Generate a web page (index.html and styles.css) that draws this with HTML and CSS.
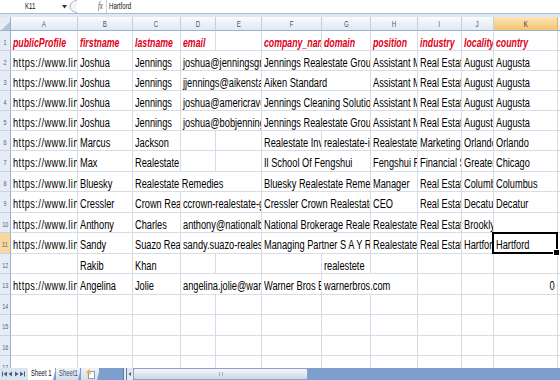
FILE: index.html
```html
<!DOCTYPE html>
<html lang="en">

<head>
    <meta charset="UTF-8">
    <meta name="viewport" content="width=device-width, initial-scale=1.0">
    <title>Book1 - Sheet 1</title>
    <link rel="stylesheet" href="styles.css">
</head>

<body>
    <div class="formula-bar">
        <div class="name-box"><span>K11</span></div>
        <div class="name-arrow">
            <svg width="6" height="4" viewBox="0 0 6 4"><polygon points="0,0 5,0 2.5,3.5" fill="#333" /></svg>
        </div>
        <div class="grip">
            <svg width="10" height="13" viewBox="0 0 10 13">
                <path d="M9 0.5 A7 6 0 0 0 9 12.5" fill="#f3f5f9" stroke="#aab6c8" />
            </svg>
        </div>
        <div class="fx"><span>fx</span></div>
        <div class="formula"><span>Hartford</span></div>
    </div>

    <div class="sheet">
        <!-- column headers -->
        <div class="corner"></div>
        <div class="ch"><span>A</span></div>
        <div class="ch"><span>B</span></div>
        <div class="ch"><span>C</span></div>
        <div class="ch"><span>D</span></div>
        <div class="ch"><span>E</span></div>
        <div class="ch"><span>F</span></div>
        <div class="ch"><span>G</span></div>
        <div class="ch"><span>H</span></div>
        <div class="ch"><span>I</span></div>
        <div class="ch"><span>J</span></div>
        <div class="ch on"><span>K</span></div>
        <div class="ch"><span>L</span></div>

        <!-- row 1 -->
        <div class="rh"><span>1</span></div>
        <div class="c hd"><span>publicProfile</span></div>
        <div class="c hd"><span>firstname</span></div>
        <div class="c hd"><span>lastname</span></div>
        <div class="c hd"><span>email</span></div>
        <div class="c"></div>
        <div class="c hd"><span>company_name</span></div>
        <div class="c hd"><span>domain</span></div>
        <div class="c hd"><span>position</span></div>
        <div class="c hd"><span>industry</span></div>
        <div class="c hd"><span>locality</span></div>
        <div class="c hd"><span>country</span></div>
        <div class="c"></div>

        <!-- row 2 -->
        <div class="rh"><span>2</span></div>
        <div class="c url"><span>https://www.linkedin.com/in/joshuajennings</span></div>
        <div class="c"><span>Joshua</span></div>
        <div class="c"><span>Jennings</span></div>
        <div class="c span2"><span>joshua@jenningsgroup.com</span></div>
        <div class="c span2"><span>Jennings Realestate Group</span></div>
        <div class="c"><span>Assistant Manager</span></div>
        <div class="c"><span>Real Estate</span></div>
        <div class="c"><span>Augusta</span></div>
        <div class="c"><span>Augusta</span></div>
        <div class="c"></div>

        <!-- row 3 -->
        <div class="rh"><span>3</span></div>
        <div class="c url"><span>https://www.linkedin.com/in/jjennings</span></div>
        <div class="c"><span>Joshua</span></div>
        <div class="c"><span>Jennings</span></div>
        <div class="c span2"><span>jjennings@aikenstandard.com</span></div>
        <div class="c span2"><span>Aiken Standard</span></div>
        <div class="c"><span>Assistant Manager</span></div>
        <div class="c"><span>Real Estate</span></div>
        <div class="c"><span>Augusta</span></div>
        <div class="c"><span>Augusta</span></div>
        <div class="c"></div>

        <!-- row 4 -->
        <div class="rh"><span>4</span></div>
        <div class="c url"><span>https://www.linkedin.com/in/joshua-j</span></div>
        <div class="c"><span>Joshua</span></div>
        <div class="c"><span>Jennings</span></div>
        <div class="c span2"><span>joshua@americravenue.com</span></div>
        <div class="c span2"><span>Jennings Cleaning Solutions</span></div>
        <div class="c"><span>Assistant Manager</span></div>
        <div class="c"><span>Real Estate</span></div>
        <div class="c"><span>Augusta</span></div>
        <div class="c"><span>Augusta</span></div>
        <div class="c"></div>

        <!-- row 5 -->
        <div class="rh"><span>5</span></div>
        <div class="c url"><span>https://www.linkedin.com/in/bobjennings</span></div>
        <div class="c"><span>Joshua</span></div>
        <div class="c"><span>Jennings</span></div>
        <div class="c span2"><span>joshua@bobjennings.com</span></div>
        <div class="c span2"><span>Jennings Realestate Group</span></div>
        <div class="c"><span>Assistant Manager</span></div>
        <div class="c"><span>Real Estate</span></div>
        <div class="c"><span>Augusta</span></div>
        <div class="c"><span>Augusta</span></div>
        <div class="c"></div>

        <!-- row 6 -->
        <div class="rh"><span>6</span></div>
        <div class="c url"><span>https://www.linkedin.com/in/marcusj</span></div>
        <div class="c"><span>Marcus</span></div>
        <div class="c"><span>Jackson</span></div>
        <div class="c"></div>
        <div class="c"></div>
        <div class="c"><span>Realestate Investments</span></div>
        <div class="c"><span>realestate-investments.com</span></div>
        <div class="c"><span>Realestate Agent</span></div>
        <div class="c"><span>Marketing and Advertising</span></div>
        <div class="c"><span>Orlando</span></div>
        <div class="c"><span>Orlando</span></div>
        <div class="c"></div>

        <!-- row 7 -->
        <div class="rh"><span>7</span></div>
        <div class="c url"><span>https://www.linkedin.com/in/maxrealestate</span></div>
        <div class="c"><span>Max</span></div>
        <div class="c"><span>Realestate</span></div>
        <div class="c"></div>
        <div class="c"></div>
        <div class="c span2"><span>Il School Of Fengshui</span></div>
        <div class="c"><span>Fengshui Realestate</span></div>
        <div class="c"><span>Financial Services</span></div>
        <div class="c"><span>Greater Chicago Area</span></div>
        <div class="c"><span>Chicago</span></div>
        <div class="c"></div>

        <!-- row 8 -->
        <div class="rh"><span>8</span></div>
        <div class="c url"><span>https://www.linkedin.com/in/bluesky</span></div>
        <div class="c"><span>Bluesky</span></div>
        <div class="c span3"><span>Realestate Remedies</span></div>
        <div class="c span2"><span>Bluesky Realestate Remedies</span></div>
        <div class="c"><span>Manager</span></div>
        <div class="c"><span>Real Estate</span></div>
        <div class="c"><span>Columbus</span></div>
        <div class="c"><span>Columbus</span></div>
        <div class="c"></div>

        <!-- row 9 -->
        <div class="rh"><span>9</span></div>
        <div class="c url"><span>https://www.linkedin.com/in/cressler</span></div>
        <div class="c"><span>Cressler</span></div>
        <div class="c"><span>Crown Realestate</span></div>
        <div class="c span2"><span>ccrown-realestate-group.com</span></div>
        <div class="c span2"><span>Cressler Crown Realestate</span></div>
        <div class="c"><span>CEO</span></div>
        <div class="c"><span>Real Estate</span></div>
        <div class="c"><span>Decatur</span></div>
        <div class="c"><span>Decatur</span></div>
        <div class="c"></div>

        <!-- row 10 -->
        <div class="rh"><span>10</span></div>
        <div class="c url"><span>https://www.linkedin.com/in/anthonyc</span></div>
        <div class="c"><span>Anthony</span></div>
        <div class="c"><span>Charles</span></div>
        <div class="c span2"><span>anthony@nationalbrokerage.com</span></div>
        <div class="c span2"><span>National Brokerage Realestate</span></div>
        <div class="c"><span>Realestate</span></div>
        <div class="c"><span>Real Estate</span></div>
        <div class="c"><span>Brooklyn</span></div>
        <div class="c"></div>
        <div class="c"></div>

        <!-- row 11 -->
        <div class="rh on"><span>11</span></div>
        <div class="c url"><span>https://www.linkedin.com/in/sandysuazo</span></div>
        <div class="c"><span>Sandy</span></div>
        <div class="c"><span>Suazo Realestate</span></div>
        <div class="c span2"><span>sandy.suazo-realestate@gmail.com</span></div>
        <div class="c span2"><span>Managing Partner S A Y R Realestate</span></div>
        <div class="c"><span>Realestate</span></div>
        <div class="c"><span>Real Estate</span></div>
        <div class="c"><span>Hartford</span></div>
        <div class="c sel"><span>Hartford</span></div>
        <div class="c"></div>

        <!-- row 12 -->
        <div class="rh"><span>12</span></div>
        <div class="c"></div>
        <div class="c"><span>Rakib</span></div>
        <div class="c"><span>Khan</span></div>
        <div class="c"></div>
        <div class="c"></div>
        <div class="c"></div>
        <div class="c"><span>realestete</span></div>
        <div class="c"></div>
        <div class="c"></div>
        <div class="c"></div>
        <div class="c"></div>
        <div class="c"></div>

        <!-- row 13 -->
        <div class="rh"><span>13</span></div>
        <div class="c url"><span>https://www.linkedin.com/in/angelinajolie</span></div>
        <div class="c"><span>Angelina</span></div>
        <div class="c"><span>Jolie</span></div>
        <div class="c span2"><span>angelina.jolie@warnerbros.com</span></div>
        <div class="c"><span>Warner Bros Entertainment</span></div>
        <div class="c span2"><span>warnerbros.com</span></div>
        <div class="c"></div>
        <div class="c"></div>
        <div class="c num"><span>0</span></div>
        <div class="c"></div>

        <!-- rows 14 - 17 -->
        <div class="rh"><span>14</span></div>
        <div class="c"></div><div class="c"></div><div class="c"></div><div class="c"></div>
        <div class="c"></div><div class="c"></div><div class="c"></div><div class="c"></div>
        <div class="c"></div><div class="c"></div><div class="c"></div><div class="c"></div>

        <div class="rh"><span>15</span></div>
        <div class="c"></div><div class="c"></div><div class="c"></div><div class="c"></div>
        <div class="c"></div><div class="c"></div><div class="c"></div><div class="c"></div>
        <div class="c"></div><div class="c"></div><div class="c"></div><div class="c"></div>

        <div class="rh"><span>16</span></div>
        <div class="c"></div><div class="c"></div><div class="c"></div><div class="c"></div>
        <div class="c"></div><div class="c"></div><div class="c"></div><div class="c"></div>
        <div class="c"></div><div class="c"></div><div class="c"></div><div class="c"></div>

        <div class="rh"><span>17</span></div>
        <div class="c"></div><div class="c"></div><div class="c"></div><div class="c"></div>
        <div class="c"></div><div class="c"></div><div class="c"></div><div class="c"></div>
        <div class="c"></div><div class="c"></div><div class="c"></div><div class="c"></div>
    </div>

    <div class="tab-bar">
        <div class="tab-nav">
            <svg width="28" height="12" viewBox="0 0 28 12">
                <rect x="2" y="3.5" width="1" height="5" fill="#4a5e7e" />
                <polygon points="7,3.5 7,8.5 3.5,6" fill="#4a5e7e" />
                <polygon points="12,3.5 12,8.5 8.5,6" fill="#4a5e7e" />
                <polygon points="15,3.5 15,8.5 18.5,6" fill="#4a5e7e" />
                <polygon points="20,3.5 20,8.5 23.5,6" fill="#4a5e7e" />
                <rect x="24" y="3.5" width="1" height="5" fill="#4a5e7e" />
            </svg>
        </div>
        <div class="tab active"><span>Sheet 1</span></div>
        <div class="tab"><span>Sheet1</span></div>
        <div class="tab tab-new">
            <svg width="10" height="10" viewBox="0 0 10 10">
                <rect x="2.5" y="2.5" width="6" height="7" fill="#fff" stroke="#8a9ab3" />
                <polygon points="3,0 4,2 6,2 4.5,3.3 5,5.5 3,4.2 1,5.5 1.5,3.3 0,2 2,2" fill="#f0a830" />
            </svg>
        </div>
        <div class="tab-fill"></div>
        <div class="split"></div>
        <div class="scroll">
            <div class="scroll-btn">
                <svg width="6" height="12" viewBox="0 0 6 12"><polygon points="4,4 4,8 1.5,6" fill="#4a5e7e" /></svg>
            </div>
            <div class="thumb"><i></i></div>
        </div>
    </div>
</body>

</html>
```

FILE: styles.css
```css
* {
    box-sizing: border-box;
}

html,
body {
    margin: 0;
}

body {
    font-family: "Liberation Sans", Arial, sans-serif;
    background: #dfe7f2;
    height: 380px;
    display: flex;
    flex-direction: column;
    overflow: hidden;
}

/* formula bar */

.formula-bar {
    display: flex;
    height: 14px;
    margin-bottom: 3px;
    background: #fff;
    border-bottom: 1px solid #a8bbd6;
    font-size: 8.5px;
    line-height: 13px;
    color: #111;
    white-space: nowrap;
}

.formula-bar span {
    display: inline-block;
    transform: scaleX(.72);
}

.name-box {
    width: 60px;
    text-align: center;
}

.name-arrow {
    width: 8px;
    padding: 5px 0 0 2px;
    line-height: 0;
}

.grip {
    width: 10px;
    line-height: 0;
}

.fx {
    width: 28px;
    text-align: right;
    padding-right: 2px;
    font-family: "Liberation Serif", serif;
    font-style: italic;
    font-size: 9.5px;
    color: #555;
}

.formula {
    flex: 1;
    border-left: 1px solid #c9d3e1;
    padding-left: 2px;
}

.formula span {
    transform-origin: 0 0;
}

/* sheet grid */

.sheet {
    flex: 1;
    min-height: 0;
    display: grid;
    grid-template-columns: 11px 67px 55px 48px 35px 46px 60px 49px 47px 44px 32px 64px 40px;
    grid-template-rows: 14px repeat(5, 20px) 20px 21px 20px 21px 20px 21px 20px 21px 20px 21px 20px 20px;
    overflow: hidden;
    background: #fff;
}

.corner {
    background: linear-gradient(135deg, #e6ecf5 62%, #b4c3d8 62%);
    border-right: 1px solid #9db1cd;
    border-bottom: 1px solid #9db1cd;
}

.ch {
    background: linear-gradient(#f9fbfd, #e2e9f3);
    border-right: 1px solid #c4d0e1;
    border-bottom: 1px solid #9db1cd;
    text-align: center;
    font-size: 8.5px;
    line-height: 14px;
    color: #44587a;
}

.ch.on {
    background: linear-gradient(#fce6bb, #f3c46c);
    border-right-color: #e0b45e;
    color: #333;
}

.rh {
    background: #e6ecf6;
    border-right: 1px solid #9db1cd;
    border-bottom: 1px solid #c8d4e5;
    text-align: center;
    font-size: 7.5px;
    padding-top: 7px;
    line-height: 10px;
    color: #4d5f7c;
}

.rh.on {
    background: #f8d99d;
}

.ch span,
.rh span {
    display: inline-block;
    transform: scaleX(.72);
}

.c {
    border-right: 1px solid #d6dde8;
    border-bottom: 1px solid #d6dde8;
    padding: 4px 0 0 2px;
    font-size: 12px;
    line-height: 16px;
    white-space: nowrap;
    overflow: hidden;
    color: #000;
}

.c span {
    display: inline-block;
    transform: scaleX(.77);
    transform-origin: 0 0;
}

.c.url span {
    letter-spacing: .6px;
}

.c.hd {
    color: #e0001b;
    font-weight: bold;
    font-style: italic;
    font-size: 12px;
}

.c.hd span {
    transform: scaleX(.73);
}

.span2 {
    grid-column: span 2;
}

.span3 {
    grid-column: span 3;
}

.c.num {
    text-align: right;
    padding-right: 2px;
}

.c.num span {
    transform-origin: 100% 0;
}

.sel {
    position: relative;
    overflow: visible;
}

.sel::after {
    content: "";
    position: absolute;
    top: -1px;
    left: -2px;
    right: -1px;
    bottom: -1px;
    border: 2px solid #000;
}

.sel::before {
    content: "";
    position: absolute;
    right: -3px;
    bottom: -3px;
    width: 5px;
    height: 5px;
    background: #000;
    border: 1px solid #fff;
    z-index: 1;
}

/* sheet tabs and scroll bar */

.tab-bar {
    display: flex;
    height: 12px;
    background: #7e9ecd;
    font-size: 8.5px;
    line-height: 11px;
    white-space: nowrap;
}

.tab-nav {
    width: 28px;
    background: #dbe4f1;
    line-height: 0;
}

.tab {
    width: 25px;
    background: linear-gradient(#eef2f8, #d3ddeb);
    border-right: 1px solid #7c90b0;
    clip-path: polygon(0 0, 100% 0, calc(100% - 3px) 100%, 0 100%);
    color: #3e4f6b;
    padding-left: 3px;
    overflow: hidden;
}

.tab span {
    display: inline-block;
    transform: scaleX(.7);
    transform-origin: 0 0;
}

.tab.active {
    width: 28px;
    background: #fff;
    color: #111;
}

.tab-new {
    width: 19px;
    padding: 1px 0 0 5px;
    line-height: 0;
}

.tab-fill {
    width: 23px;
}

.split {
    width: 4px;
    background: #e8edf5;
    border-left: 1px solid #5f7aa3;
    border-right: 1px solid #5f7aa3;
}

.scroll {
    flex: 1;
    display: flex;
}

.scroll-btn {
    width: 6px;
    background: #e3e9f2;
    line-height: 0;
}

.thumb {
    width: 175px;
    background: linear-gradient(#f6f8fb, #cbd6e5);
    border: 1px solid #8ea3c2;
    border-radius: 2px;
    display: flex;
    justify-content: center;
    align-items: center;
}

.thumb i {
    width: 4px;
    height: 4px;
    border-left: 1px solid #9aabc4;
    border-right: 1px solid #9aabc4;
}
```
